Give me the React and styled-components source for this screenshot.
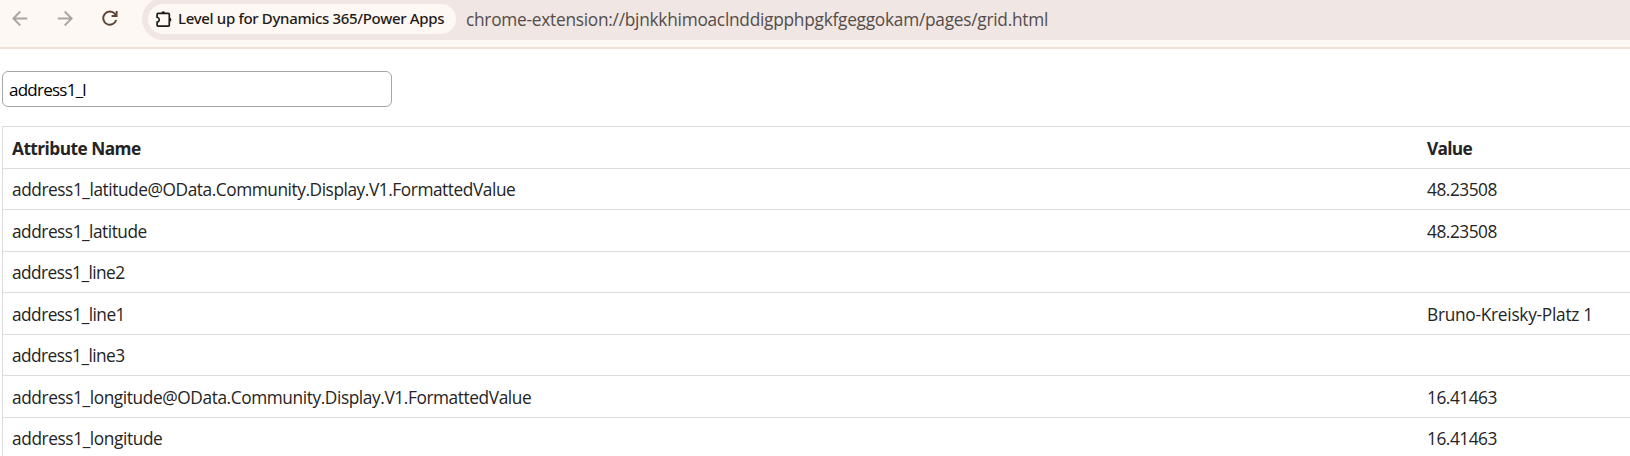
import React, { useState } from "react";
import styled, { createGlobalStyle } from "styled-components";

const GlobalStyle = createGlobalStyle`
  * { box-sizing: border-box; }
  html, body { margin: 0; background: #fff; overflow: hidden; }
  body {
    color: #242424;
    font-family: "Open Sans", "Noto Sans", sans-serif;
    font-size: 17.3px;
  }
`;

const Window = styled.div`
  width: 100%;
  height: 456px;
  overflow: hidden;
`;

const Toolbar = styled.header`
  display: flex;
  align-items: flex-start;
  height: 49px;
  overflow: hidden;
  background: #fef8f4;
  border-bottom: 2px solid #f2dfd3;
`;

const NavButtons = styled.nav`
  display: flex;
  gap: 21px;
  padding: 6px 0 0 8px;
  width: 142px;
  flex: none;
`;

const NavButton = styled.button`
  display: flex;
  align-items: center;
  justify-content: center;
  width: 24px;
  height: 24px;
  padding: 0;
  border: 0;
  background: none;
  color: ${(p) => (p.$muted ? "#aaa5a2" : "#5c4437")};
`;

const AddressBar = styled.div`
  display: flex;
  align-items: flex-end;
  flex: 1;
  height: 42px;
  margin-top: -2px;
  padding: 0 0 6px 6px;
  background: #f0e6e4;
  border-radius: 21px 0 0 21px;
`;

const Chip = styled.div`
  display: flex;
  align-items: center;
  gap: 5px;
  width: 308px;
  height: 30px;
  padding-left: 7px;
  border-radius: 15px;
  background: #fef8f4;
  color: #1f1a18;
  white-space: nowrap;
`;

const ChipLabel = styled.span`
  height: 30px;
  font-family: "Noto Sans", sans-serif;
  font-size: 15px;
  font-weight: 500;
  line-height: 28px;
  letter-spacing: -0.33px;
`;

const Url = styled.span`
  height: 30px;
  margin-left: 10px;
  color: #544d4a;
  line-height: 32px;
  letter-spacing: -0.255px;
  white-space: nowrap;
`;

const Page = styled.main`
  padding: 22px 0 0 2px;
`;

const SearchInput = styled.input`
  display: block;
  width: 390px;
  height: 36px;
  margin-bottom: 19px;
  padding: 0 6px;
  border: 1px solid #a6a6a6;
  border-radius: 6px;
  outline: none;
  background: #fff;
  color: #000;
  font: inherit;
  font-size: 17px;
  letter-spacing: -0.75px;
`;

const Grid = styled.div`
  border-top: 1px solid #dcdcdc;
  border-left: 1px solid #dcdcdc;
`;

const Row = styled.div`
  display: grid;
  grid-template-columns: 1415px 1fr;
  height: 41.5px;
  border-bottom: 1px solid #dcdcdc;
  font-weight: ${(p) => (p.$head ? 700 : 400)};
`;

const Cell = styled.div`
  padding: 0.7px 0 0 9px;
  height: 40px;
  line-height: 42px;
  letter-spacing: ${(p) => p.$tracking}px;
  white-space: nowrap;
`;

const ArrowIcon = ({ flip }) => (
  <svg width="16" height="16" viewBox="0 0 16 16" fill="none" stroke="currentColor" strokeWidth="1.9" transform={flip ? "scale(-1 1)" : undefined}>
    <path d="M15.2 8.5H1.8M8.3 1.5L1.3 8.5l7 7" />
  </svg>
);

const ReloadIcon = () => (
  <svg width="16" height="16" viewBox="0 0 16 16" fill="none" stroke="currentColor" strokeWidth="1.9">
    <path d="M14.2 10A6.6 6.6 0 1 1 12.9 3.9L14.2 5.4" />
    <path d="M14.6 1V6H9.6" />
  </svg>
);

const ExtensionIcon = () => (
  <svg width="18" height="18" viewBox="0 0 18 18">
    <path
      d="M2.3 3.4H13.4Q14.3 3.4 14.3 4.3V15.2Q14.3 16.1 13.4 16.1H3.2Q2.1 16.1 2.1 15.2V12.1Q4.3 11.5 4.3 9.7T2.1 7.3V4.3Q2.1 3.4 3.2 3.4Z"
      fill="none"
      stroke="currentColor"
      strokeWidth="1.7"
    />
    <path d="M6.4 3.2A1.9 1.9 0 0 1 10.2 3.2ZM14.5 7.8A1.9 1.9 0 0 1 14.5 11.6Z" fill="currentColor" />
  </svg>
);

const rows = [
  { name: "address1_latitude@OData.Community.Display.V1.FormattedValue", value: "48.23508", tracking: [-0.44, -0.47] },
  { name: "address1_latitude", value: "48.23508", tracking: [-0.48, -0.47] },
  { name: "address1_line2", value: "", tracking: [-0.56, 0] },
  { name: "address1_line1", value: "Bruno-Kreisky-Platz 1", tracking: [-0.53, -0.27] },
  { name: "address1_line3", value: "", tracking: [-0.56, 0] },
  { name: "address1_longitude@OData.Community.Display.V1.FormattedValue", value: "16.41463", tracking: [-0.41, -0.47] },
  { name: "address1_longitude", value: "16.41463", tracking: [-0.4, -0.47] },
];

export default function App() {
  const [query, setQuery] = useState("address1_l");
  return (
    <Window>
      <GlobalStyle />
      <Toolbar>
        <NavButtons>
          <NavButton $muted aria-label="Back"><ArrowIcon /></NavButton>
          <NavButton $muted aria-label="Forward"><ArrowIcon flip /></NavButton>
          <NavButton aria-label="Reload"><ReloadIcon /></NavButton>
        </NavButtons>
        <AddressBar>
          <Chip>
            <ExtensionIcon />
            <ChipLabel>Level up for Dynamics 365/Power Apps</ChipLabel>
          </Chip>
          <Url>chrome-extension://bjnkkhimoaclnddigpphpgkfgeggokam/pages/grid.html</Url>
        </AddressBar>
      </Toolbar>
      <Page>
        <SearchInput value={query} onChange={(e) => setQuery(e.target.value)} />
        <Grid>
          <Row $head>
            <Cell $tracking={-0.54}>Attribute Name</Cell>
            <Cell $tracking={-0.7}>Value</Cell>
          </Row>
          {rows.map(({ name, value, tracking }) => (
            <Row key={name}>
              <Cell $tracking={tracking[0]}>{name}</Cell>
              <Cell $tracking={tracking[1]}>{value}</Cell>
            </Row>
          ))}
        </Grid>
      </Page>
    </Window>
  );
}
